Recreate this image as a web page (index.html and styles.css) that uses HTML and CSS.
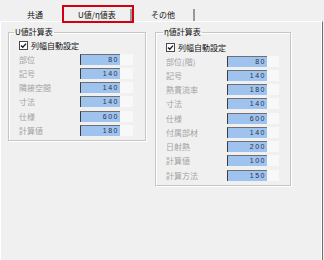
FILE: index.html
```html
<!DOCTYPE html>
<html lang="ja">
<head>
  <meta charset="UTF-8" />
  <title>U値/η値表</title>
  <link rel="stylesheet" href="styles.css">
</head>
<body>
  <!-- Tab strip -->
  <div class="tabs">
    <div class="tab tab-first">共通</div>
    <div class="tab tab-second">U値/η値表</div>
    <div class="tab tab-third">その他</div>
    <div class="mark"></div>
  </div>

  <!-- Tab page -->
  <div class="page">
    <fieldset class="group group-u">
      <legend>U値計算表</legend>
      <div class="check">
        <svg width="9" height="9" viewBox="0 0 9 9"><rect x="0.5" y="0.5" width="8" height="8" fill="#fff" stroke="#4a4a4a"/><polyline points="2,4.5 3.8,6.3 7,2.6" fill="none" stroke="#1a1a1a" stroke-width="1.3"/></svg>
        <span>列幅自動設定</span>
      </div>
      <div class="row"><span class="name">部位</span><span class="field"><span class="value">80</span></span></div>
      <div class="row"><span class="name">記号</span><span class="field"><span class="value">140</span></span></div>
      <div class="row"><span class="name">隣接空間</span><span class="field"><span class="value">140</span></span></div>
      <div class="row"><span class="name">寸法</span><span class="field"><span class="value">140</span></span></div>
      <div class="row"><span class="name">仕様</span><span class="field"><span class="value">600</span></span></div>
      <div class="row"><span class="name">計算値</span><span class="field"><span class="value">180</span></span></div>
    </fieldset>

    <fieldset class="group group-eta">
      <legend>η値計算表</legend>
      <div class="check">
        <svg width="9" height="9" viewBox="0 0 9 9"><rect x="0.5" y="0.5" width="8" height="8" fill="#fff" stroke="#4a4a4a"/><polyline points="2,4.5 3.8,6.3 7,2.6" fill="none" stroke="#1a1a1a" stroke-width="1.3"/></svg>
        <span>列幅自動設定</span>
      </div>
      <div class="row"><span class="name">部位(階)</span><span class="field"><span class="value">80</span></span></div>
      <div class="row"><span class="name">記号</span><span class="field"><span class="value">140</span></span></div>
      <div class="row"><span class="name">熱貫流率</span><span class="field"><span class="value">180</span></span></div>
      <div class="row"><span class="name">寸法</span><span class="field"><span class="value">140</span></span></div>
      <div class="row"><span class="name">仕様</span><span class="field"><span class="value">600</span></span></div>
      <div class="row"><span class="name">付属部材</span><span class="field"><span class="value">140</span></span></div>
      <div class="row"><span class="name">日射熱</span><span class="field"><span class="value">200</span></span></div>
      <div class="row"><span class="name">計算値</span><span class="field"><span class="value">100</span></span></div>
      <div class="row"><span class="name">計算方法</span><span class="field"><span class="value">150</span></span></div>
    </fieldset>
  </div>
</body>
</html>
```

FILE: styles.css
```css
/* Base */
html, body {
  margin: 0;
  padding: 0;
  background: #f0f0f0;
  font-family: "Noto Sans CJK JP", "Noto Sans", sans-serif;
  font-size: 8px;
  color: #111;
}
body {
  width: 324px;
  height: 260px;
  overflow: hidden;
}

/* Tab strip */
.tabs {
  display: flex;
  height: 21px;
  position: relative;
}
.tab {
  margin-top: 9px;
  height: 12px;
  line-height: 12px;
  box-sizing: border-box;
  white-space: nowrap;
}
.tab-first { width: 62px; padding-left: 27px; }
.tab-second {
  width: 70px;
  padding-left: 16px;
  border-right: 2px solid #9a9a9a;
}
.tab-third {
  width: 63px;
  padding-left: 19px;
  border-right: 2px solid #9a9a9a;
}
/* red highlight drawn over the active tab */
.mark {
  position: absolute;
  left: 62px;
  top: 5px;
  width: 72px;
  height: 18px;
  box-sizing: border-box;
  border: 2px solid #d40010;
}

/* Tab page */
.page {
  height: 239px;
  box-sizing: border-box;
  margin-right: 1px;
  border-top: 1px solid #fff;
  border-left: 1px solid #fff;
  border-right: 1px solid #6e6e6e;
  box-shadow: inset -1px 0 0 #fff;
  padding: 4px 0 0 7px;
  display: flex;
  align-items: flex-start;
  gap: 9px;
}

/* Group boxes */
.group {
  margin: 0;
  min-width: 0;
  box-sizing: border-box;
  border: 1px solid #c6c6c6;
  box-shadow: inset 1px 1px 0 #fff, 1px 1px 0 #fff;
  padding: 0 0 2px 10px;
}
.group legend {
  padding: 0 1px;
  margin-left: -5px;
  line-height: 12px;
  color: #111;
}
.group-u { width: 138px; }
.group-eta {
  width: 136px;
  padding-top: 2px;
  padding-bottom: 3px;
}
.group-eta legend { margin-left: -3px; }

.check {
  display: flex;
  align-items: center;
  height: 14px;
  gap: 3px;
}
.check svg { display: block; }

/* Rows */
.row {
  display: flex;
  align-items: center;
  height: 14.25px;
}
.name {
  width: 61px;
  color: #a3a3a3;
  white-space: nowrap;
}
.field {
  width: 53px;
  height: 11px;
  background: #f8f8f8;
}
.group-eta .field { width: 52px; }
.value {
  display: block;
  width: 40px;
  height: 11px;
  box-sizing: border-box;
  background: #9fc3ef;
  border-left: 1px solid #3c3c3c;
  border-top: 1px solid #707070;
  padding-right: 1px;
  text-align: right;
  font-family: "Liberation Sans", sans-serif;
  font-size: 7px;
  line-height: 10px;
  letter-spacing: 1.5px;
  color: #2b2f48;
}
```
